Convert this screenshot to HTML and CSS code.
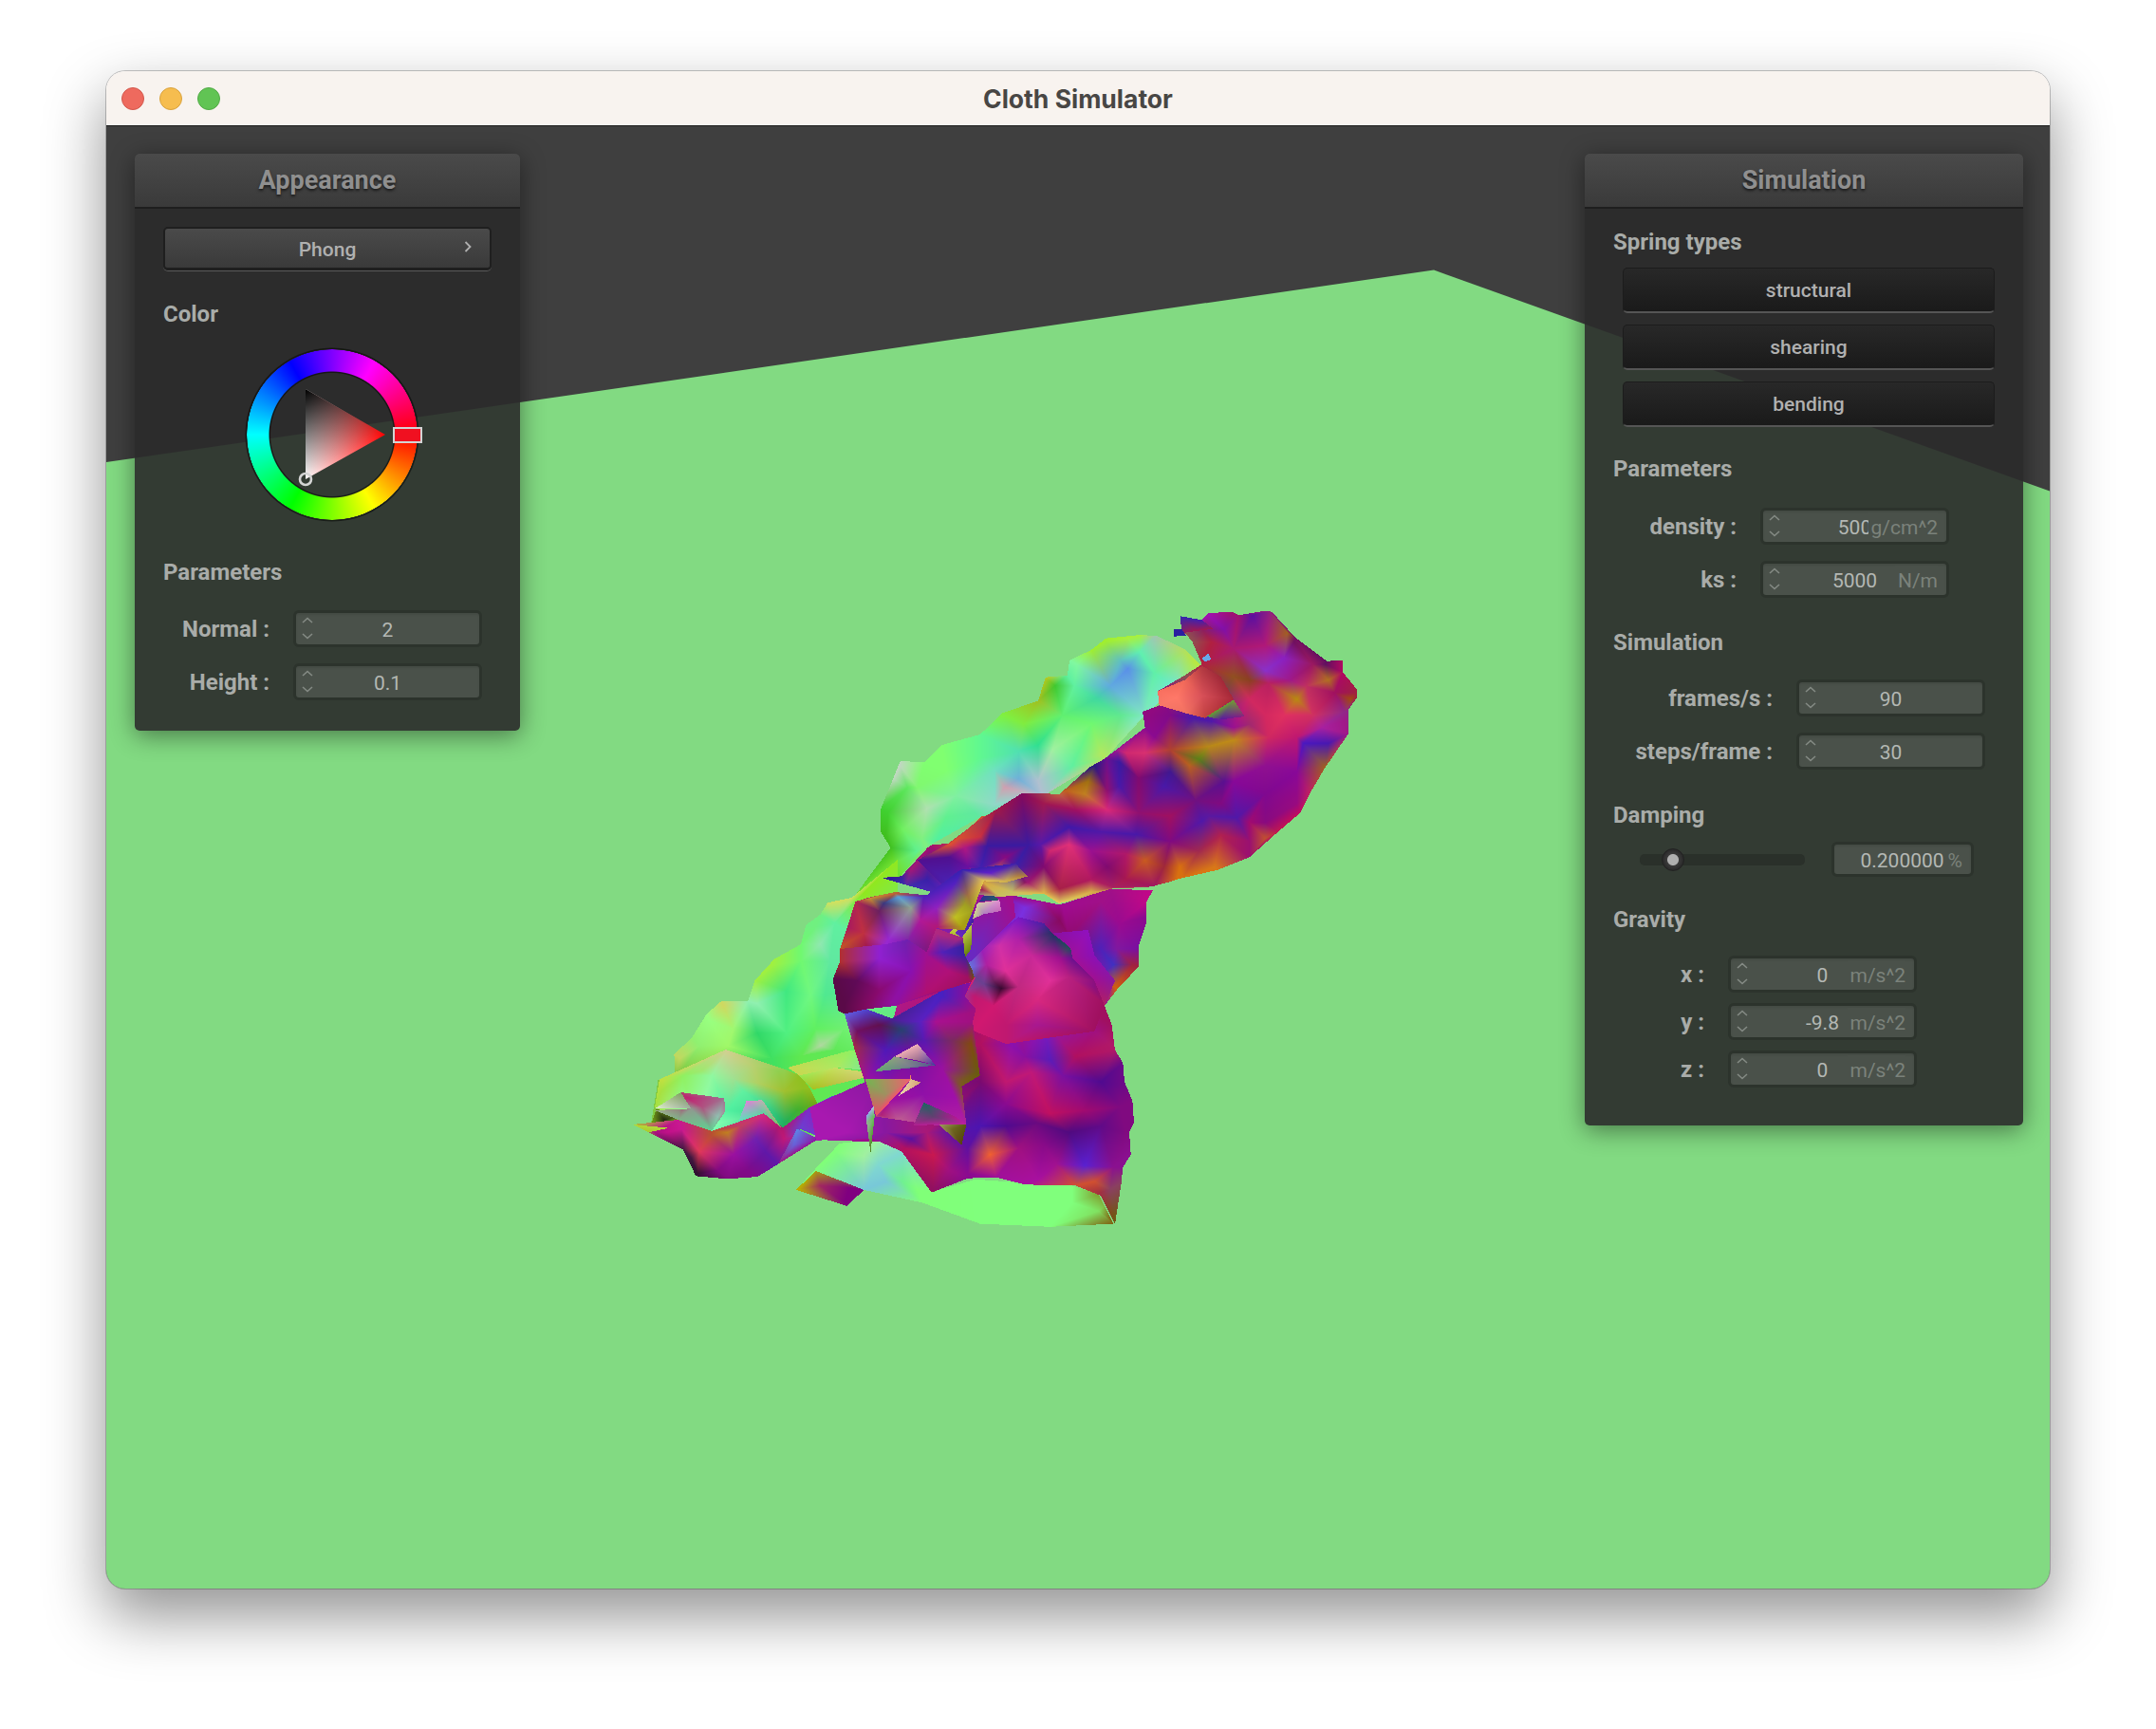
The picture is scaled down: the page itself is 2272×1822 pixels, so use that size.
FILE: index.html
```html
<!DOCTYPE html>
<html lang="en">
<head>
    <meta charset="UTF-8">
    <title>Cloth Simulator</title>
    <link rel="stylesheet" href="styles.css">
</head>
<body>

    <svg class="defs" width="0" height="0">
        <defs>
            <symbol id="spin" viewBox="0 0 14 26">
                <path d="M2 7 L7 2.5 L12 7 M2 19 L7 23.5 L12 19" fill="none" stroke="currentColor" stroke-width="1.6"/>
            </symbol>
        </defs>
    </svg>

    <div class="window">
        <div class="titlebar">
            <div class="lights">
                <span class="light red"></span>
                <span class="light yellow"></span>
                <span class="light green"></span>
            </div>
            <div class="title">Cloth Simulator</div>
        </div>

        <div class="canvas">
            <svg class="scene" viewBox="0 0 2048 1542">
                <polygon class="floor" points="0,355 1399,152.5 2048,385.5 2048,1542 0,1542"/>
            </svg>
            <canvas class="cloth" id="cloth" width="800" height="700"></canvas>

            <div class="panel panel-left">
                <div class="panel-head">Appearance</div>
                <div class="panel-body">
                    <div class="select">Phong
                        <svg class="select-arrow" viewBox="0 0 8 12"><path d="M1.5 1 L6.5 6 L1.5 11" fill="none" stroke="currentColor" stroke-width="1.8"/></svg>
                    </div>
                    <div class="group group-color">Color</div>
                    <div class="wheel-box">
                        <div class="wheel"></div>
                        <svg class="wheel-tri" viewBox="0 0 210 210">
                            <defs>
                                <linearGradient id="tri-hue" gradientUnits="userSpaceOnUse" x1="146" y1="0" x2="62" y2="0"><stop offset="0" stop-color="#f00"/><stop offset="1" stop-color="#fff"/></linearGradient>
                                <linearGradient id="tri-dark" gradientUnits="userSpaceOnUse" x1="104" y1="121" x2="62" y2="50"><stop offset="0" stop-color="#000" stop-opacity="0"/><stop offset="1" stop-color="#000"/></linearGradient>
                            </defs>
                            <polygon points="62,50 146,98 62,145" fill="url(#tri-hue)"/>
                            <polygon points="62,50 146,98 62,145" fill="url(#tri-dark)"/>
                            <circle cx="62" cy="145" r="6" fill="none" stroke="#d4d4d4" stroke-width="2.6"/>
                            <rect x="155" y="91" width="29" height="15" fill="#f01020" stroke="#d4d4d4" stroke-width="2"/>
                        </svg>
                    </div>
                    <div class="group group-params">Parameters</div>
                    <div class="rows rows-first">
                        <div class="row row-left"><label>Normal :</label><div class="field"><svg class="spin"><use href="#spin"/></svg>2</div></div>
                        <div class="row row-left"><label>Height :</label><div class="field"><svg class="spin"><use href="#spin"/></svg>0.1</div></div>
                    </div>
                </div>
            </div>

            <div class="panel panel-right">
                <div class="panel-head">Simulation</div>
                <div class="panel-body">
                    <div class="group group-springs">Spring types</div>
                    <div class="springs">
                        <div class="toggle">structural</div>
                        <div class="toggle">shearing</div>
                        <div class="toggle">bending</div>
                    </div>
                    <div class="group group-p2">Parameters</div>
                    <div class="rows rows-first">
                        <div class="row row-density"><label>density :</label><div class="field"><svg class="spin"><use href="#spin"/></svg>500<span class="unit">g/cm^2</span></div></div>
                        <div class="row row-density"><label>ks :</label><div class="field"><svg class="spin"><use href="#spin"/></svg>5000<span class="unit">N/m</span></div></div>
                    </div>
                    <div class="group group-sim">Simulation</div>
                    <div class="rows rows-sim">
                        <div class="row row-sim"><label>frames/s :</label><div class="field"><svg class="spin"><use href="#spin"/></svg>90</div></div>
                        <div class="row row-sim"><label>steps/frame :</label><div class="field"><svg class="spin"><use href="#spin"/></svg>30</div></div>
                    </div>
                    <div class="group group-damp">Damping</div>
                    <div class="damp-row">
                        <div class="slider"><span class="knob"></span></div>
                        <div class="field field-damp">0.200000<span class="unit-inline">%</span></div>
                    </div>
                    <div class="group group-grav">Gravity</div>
                    <div class="rows rows-grav">
                        <div class="row row-grav"><label>x :</label><div class="field"><svg class="spin"><use href="#spin"/></svg>0<span class="unit">m/s^2</span></div></div>
                        <div class="row row-grav"><label>y :</label><div class="field"><svg class="spin"><use href="#spin"/></svg>-9.8<span class="unit">m/s^2</span></div></div>
                        <div class="row row-grav"><label>z :</label><div class="field"><svg class="spin"><use href="#spin"/></svg>0<span class="unit">m/s^2</span></div></div>
                    </div>
                </div>
            </div>
        </div>
    </div>

    <script src="cloth.js"></script>
</body>
</html>
```

FILE: styles.css
```css
html, body {
    margin: 0;
    padding: 0;
    background: #fff;
}
body {
    padding: 75px 112px 0;
    height: 1822px;
    box-sizing: border-box;
    overflow: hidden;
    font-family: Roboto, sans-serif;
}
.defs {
    position: absolute;
}
.window {
    width: 2048px;
    height: 1599px;
    border-radius: 20px;
    overflow: hidden;
    box-shadow: 0 28px 62px 2px rgba(0, 0, 0, 0.42), 0 0 0 1px rgba(0, 0, 0, 0.22);
    display: flex;
    flex-direction: column;
}
.titlebar {
    position: relative;
    height: 58px;
    flex: none;
    background: #f8f3ef;
    border-bottom: 1px solid #1c1c1c;
    box-sizing: border-box;
    display: flex;
    align-items: center;
    justify-content: center;
}
.lights {
    position: absolute;
    left: 16px;
    top: 17px;
    display: flex;
    gap: 16px;
}
.light {
    width: 24px;
    height: 24px;
    border-radius: 50%;
    box-sizing: border-box;
}
.red {
    background: #ee6a5e;
    border: 1px solid #d2574c;
}
.yellow {
    background: #f6bd4f;
    border: 1px solid #d9a23d;
}
.green {
    background: #61c454;
    border: 1px solid #52aa46;
}
.title {
    font-family: Inter, sans-serif;
    font-weight: 700;
    font-size: 26.5px;
    color: #484644;
}
.canvas {
    position: relative;
    flex: 1;
    background: #3f3f3f;
}
.scene {
    position: absolute;
    left: 0;
    top: -1px;
    width: 2048px;
    height: 1542px;
}
.floor {
    fill: #82da82;
}
.cloth {
    position: absolute;
    left: 528px;
    top: 487px;
}
.panel {
    position: absolute;
    top: 29px;
    box-sizing: border-box;
    background: rgba(43, 43, 43, 0.91);
    border-radius: 5px;
    box-shadow: 0 5px 26px rgba(0, 0, 0, 0.45);
    color: #a9aca9;
}
.panel-left {
    left: 30px;
    width: 406px;
    height: 608px;
}
.panel-right {
    left: 1558px;
    width: 462px;
    height: 1024px;
}
.panel-head {
    height: 58px;
    box-sizing: border-box;
    background: linear-gradient(#4a4a4a, #3a3a3a);
    border-bottom: 2px solid #1e1e1e;
    border-radius: 5px 5px 0 0;
    text-align: center;
    line-height: 57px;
    font-size: 27px;
    font-weight: 700;
    color: #8f8f8f;
    text-shadow: 0 2px 3px rgba(0, 0, 0, 0.6);
}
.panel-body {
    padding: 0 30px;
}
.select {
    position: relative;
    margin-top: 19px;
    height: 46px;
    width: 346px;
    box-sizing: border-box;
    background: linear-gradient(#4a4a4a, #3a3a3a);
    border: 2px solid #1f1f1f;
    border-bottom: 3px solid #1f1f1f;
    box-shadow: 0 1px 0 #5a5a5a;
    border-radius: 5px;
    text-align: center;
    line-height: 44px;
    font-size: 21px;
    font-weight: 500;
    color: #b0b0b0;
}
.select-arrow {
    position: absolute;
    right: 19px;
    top: 13px;
    width: 8px;
    height: 12px;
    color: #b0b0b0;
}
.group {
    height: 28px;
    line-height: 29px;
    font-size: 24px;
    font-weight: 700;
    color: #a9aca9;
}
.group-color {
    margin-top: 32px;
}
.wheel-box {
    position: relative;
    margin: 23px 0 0 88px;
    width: 180px;
    height: 180px;
    border-radius: 50%;
    box-shadow: 0 0 0 1.5px rgba(0, 0, 0, 0.5);
    background: radial-gradient(circle, transparent 64.5px, rgba(0, 0, 0, 0.5) 65.5px, rgba(0, 0, 0, 0.5) 67px, transparent 67.5px);
}
.wheel {
    width: 180px;
    height: 180px;
    border-radius: 50%;
    background: conic-gradient(from 90deg, #f00, #ff0, #0f0, #0ff, #00f, #f0f, #f00);
    -webkit-mask: radial-gradient(circle, transparent 66px, #000 67px, #000 89.5px, transparent 90px);
    mask: radial-gradient(circle, transparent 66px, #000 67px, #000 89.5px, transparent 90px);
}
.wheel-tri {
    position: absolute;
    left: 0;
    top: -8px;
    width: 210px;
    height: 210px;
}
.group-params {
    margin-top: 41px;
}
.rows {
    display: flex;
    flex-direction: column;
    gap: 17px;
}
.rows-first {
    margin-top: 26px;
}
.panel-right .rows-first {
    margin-top: 27px;
}
.row {
    display: flex;
    align-items: center;
    gap: 25px;
}
.row label {
    text-align: right;
    font-size: 24px;
    line-height: 30px;
    font-weight: 700;
    color: #a9aca9;
}
.row-left label {
    width: 112px;
}
.row-density label {
    width: 130px;
}
.row-sim label {
    width: 168px;
}
.row-grav label {
    width: 96px;
}
.field {
    position: relative;
    width: 199px;
    height: 39px;
    box-sizing: border-box;
    background: #4a514a;
    border: 3px solid #2c332c;
    border-radius: 6px;
    box-shadow: inset 0 2px 2px rgba(0, 0, 0, 0.08);
    text-align: center;
    line-height: 36px;
    font-size: 21px;
    color: #b4b8b4;
}
.spin {
    position: absolute;
    left: 5px;
    top: 3px;
    width: 14px;
    height: 26px;
    color: #848a84;
}
.unit {
    position: absolute;
    right: 9px;
    top: 2px;
    bottom: 2px;
    line-height: 32px;
    padding-left: 3px;
    background: #4a514a;
    color: #7b827b;
}
.group-springs {
    margin-top: 21px;
}
.springs {
    margin: 13px 0 0 10px;
    display: flex;
    flex-direction: column;
    gap: 12px;
}
.toggle {
    width: 392px;
    height: 48px;
    box-sizing: border-box;
    background: linear-gradient(#282828, #1a1a1a);
    border: 1px solid #1c1c1c;
    border-bottom: 2px solid #555;
    border-radius: 5px;
    text-align: center;
    line-height: 46px;
    font-size: 21px;
    font-weight: 500;
    color: #b0b0b0;
}
.group-p2 {
    margin-top: 30px;
}
.group-sim {
    margin-top: 33px;
}
.rows-sim {
    margin-top: 25px;
}
.group-damp {
    margin-top: 34px;
}
.damp-row {
    margin: 14px 0 0 28px;
    display: flex;
    align-items: center;
    gap: 28px;
}
.slider {
    position: relative;
    width: 174px;
    height: 12px;
    background: #2a302a;
    border-radius: 5px;
}
.knob {
    position: absolute;
    left: 23px;
    top: -6px;
    width: 24px;
    height: 24px;
    box-sizing: border-box;
    border-radius: 50%;
    background: radial-gradient(circle, #b0b0b0 0 5.5px, #3a3a3a 6.5px, #262626 12px);
    border: 1px solid #222;
}
.field-damp {
    width: 150px;
    height: 37px;
    line-height: 34px;
    text-align: right;
    padding-right: 9px;
}
.unit-inline {
    margin-left: 4px;
    color: #7b827b;
}
.group-grav {
    margin-top: 31px;
}
.rows-grav {
    margin-top: 24px;
    gap: 11px;
}
```

FILE: cloth.js
```js
// The cloth is the OpenGL view of the app, so it is painted pixel by pixel:
// each piece is an outline plus colour samples, triangulated and
// shaded across each triangle the way the original mesh is.

const canvas = document.getElementById("cloth");
const ctx = canvas.getContext("2d");
const image = ctx.createImageData(canvas.width, canvas.height);

// coordinate systems the points were measured in, origin and scale on the page
const WIDE = { ox: 640, oy: 620, sx: 1.96, sy: 2.24 };
const MID = { ox: 860, oy: 900, sx: 3, sy: 3 };
const LOW = { ox: 640, oy: 1000, sx: 3, sy: 3 };
const TOP = { ox: 1000, oy: 620, sx: 3, sy: 3 };

function parseHex(hex) {
    return [parseInt(hex.slice(1, 3), 16), parseInt(hex.slice(3, 5), 16), parseInt(hex.slice(5, 7), 16)];
}

function toPixels(crop, x, y) {
    return [crop.ox + x / crop.sx - 640, crop.oy + y / crop.sy - 620];
}

function inCircle(t, p) {
    const ax = t.a[0] - p[0], ay = t.a[1] - p[1];
    const bx = t.b[0] - p[0], by = t.b[1] - p[1];
    const cx = t.c[0] - p[0], cy = t.c[1] - p[1];
    const det = (ax * ax + ay * ay) * (bx * cy - cx * by)
        - (bx * bx + by * by) * (ax * cy - cx * ay)
        + (cx * cx + cy * cy) * (ax * by - bx * ay);
    const turn = (t.b[0] - t.a[0]) * (t.c[1] - t.a[1]) - (t.b[1] - t.a[1]) * (t.c[0] - t.a[0]);
    return turn > 0 ? det > 0 : det < 0;
}

// Bowyer-Watson
function triangulate(dots) {
    const big = [[-9000, -9000, 0, 0, 0], [12000, -9000, 0, 0, 0], [0, 12000, 0, 0, 0]];
    let tris = [{ a: big[0], b: big[1], c: big[2] }];
    dots.forEach(function (p) {
        const edges = [];
        const keep = [];
        tris.forEach(function (t) {
            if (inCircle(t, p)) {
                edges.push([t.a, t.b], [t.b, t.c], [t.c, t.a]);
            } else {
                keep.push(t);
            }
        });
        edges.forEach(function (e, i) {
            const shared = edges.some(function (f, j) {
                return i !== j && ((e[0] === f[0] && e[1] === f[1]) || (e[0] === f[1] && e[1] === f[0]));
            });
            if (!shared) {
                keep.push({ a: e[0], b: e[1], c: p });
            }
        });
        tris = keep;
    });
    return tris.filter(function (t) {
        return big.indexOf(t.a) < 0 && big.indexOf(t.b) < 0 && big.indexOf(t.c) < 0;
    });
}

function nearest(dots, x, y) {
    let best = dots[0], bestD = Infinity;
    dots.forEach(function (d) {
        const q = (d[0] - x) * (d[0] - x) + (d[1] - y) * (d[1] - y);
        if (q < bestD) {
            bestD = q;
            best = d;
        }
    });
    return best;
}

function piece(crop, outline, samples) {
    const nums = outline.trim().split(/[\s,]+/).map(Number);
    const pts = [];
    for (let i = 0; i < nums.length; i += 2) {
        pts.push(toPixels(crop, nums[i], nums[i + 1]));
    }
    const dots = samples.trim().split(/\s+/).map(function (token, i) {
        const parts = token.split(",");
        const p = toPixels(crop, Number(parts[0]), Number(parts[1]));
        const c = parseHex(parts[2]);
        return [p[0] + (i % 7) * 0.003, p[1] + (i % 5) * 0.003, c[0], c[1], c[2]];
    });

    // outline corners take the colour of the closest sample, so the mesh reaches the edge
    const corners = [];
    pts.forEach(function (p, i) {
        const n = nearest(dots, p[0], p[1]);
        const q = (n[0] - p[0]) * (n[0] - p[0]) + (n[1] - p[1]) * (n[1] - p[1]);
        if (q > 4) {
            corners.push([p[0] + 0.002 * i, p[1] - 0.002 * i, n[2], n[3], n[4]]);
        }
    });
    const mesh = triangulate(dots.concat(corners));

    // mark the pixels inside the outline
    const w = canvas.width, h = canvas.height;
    const inside = new Uint8Array(w * h);
    for (let y = 0; y < h; y++) {
        const cy = y + 0.5;
        const cross = [];
        for (let i = 0; i < pts.length; i++) {
            const a = pts[i], b = pts[(i + 1) % pts.length];
            if ((a[1] <= cy) !== (b[1] <= cy)) {
                cross.push(a[0] + (cy - a[1]) * (b[0] - a[0]) / (b[1] - a[1]));
            }
        }
        cross.sort(function (m, n) { return m - n; });
        for (let k = 0; k + 1 < cross.length; k += 2) {
            const from = Math.max(0, Math.round(cross[k]));
            const to = Math.min(w - 1, Math.round(cross[k + 1]) - 1);
            for (let x = from; x <= to; x++) {
                inside[y * w + x] = 1;
            }
        }
    }

    mesh.forEach(function (t) {
        const ax = t.a[0], ay = t.a[1], bx = t.b[0], by = t.b[1], cx = t.c[0], cy = t.c[1];
        const area = (bx - ax) * (cy - ay) - (by - ay) * (cx - ax);
        if (Math.abs(area) < 0.001) {
            return;
        }
        const x0 = Math.max(0, Math.floor(Math.min(ax, bx, cx)));
        const x1 = Math.min(w - 1, Math.ceil(Math.max(ax, bx, cx)));
        const y0 = Math.max(0, Math.floor(Math.min(ay, by, cy)));
        const y1 = Math.min(h - 1, Math.ceil(Math.max(ay, by, cy)));
        for (let y = y0; y <= y1; y++) {
            for (let x = x0; x <= x1; x++) {
                if (!inside[y * w + x]) {
                    continue;
                }
                const px = x + 0.5, py = y + 0.5;
                const u = ((bx - px) * (cy - py) - (by - py) * (cx - px)) / area;
                const v = ((cx - px) * (ay - py) - (cy - py) * (ax - px)) / area;
                const s = 1 - u - v;
                if (u < -0.01 || v < -0.01 || s < -0.01) {
                    continue;
                }
                const at = (y * w + x) * 4;
                image.data[at] = u * t.a[2] + v * t.b[2] + s * t.c[2];
                image.data[at + 1] = u * t.a[3] + v * t.b[3] + s * t.c[3];
                image.data[at + 2] = u * t.a[4] + v * t.b[4] + s * t.c[4];
                image.data[at + 3] = 255;
            }
        }
    });
}

// back side of the sheet, upper part
piece(WIDE, "1000,145 1030,118 1100,110 1135,112 1195,145 1225,180 1110,300 1030,400 900,490 770,540 660,610 605,680 560,720 505,735 585,612 565,575 565,520 590,450 605,408 655,410 690,370 770,345 815,295 890,265 905,210 950,205 955,170",
    `1030,125,#a0ee30 1075,118,#a8f040 1130,115,#a0c8b0 1190,150,#b0e060 1215,175,#b8e840 1100,150,#60f0b0 1060,170,#60c0c0 1075,190,#5a90e8 1130,200,#60f0a8 1170,230,#70e8d0 1040,230,#60a8e0 1010,260,#40d8a0 970,180,#80f8a0 965,230,#60f0a0 925,230,#40c830 900,215,#c0c820 890,265,#a0c020 940,300,#60f070 1000,320,#70f870 1060,300,#60e890 1095,310,#80e8c0 860,320,#80ec40 820,300,#80f040 890,370,#30e090 850,385,#50e0b0 800,430,#70e0c0 920,380,#a0f0a0 1020,390,#b0e860 960,420,#60f0a0 850,450,#70b0d8 890,455,#b0c0d0 820,470,#d0a0b0 770,400,#60f890 700,430,#80ff70 640,470,#80f870 720,490,#80f0a0 605,420,#c0d8c0 620,470,#60e860 660,520,#b0e0b0 580,530,#40d030 575,580,#40c020 610,570,#70f060 650,590,#80f080 700,540,#60f090 760,530,#60e8a0 800,510,#90d8c8 680,600,#50f0a0 640,620,#60f090 590,650,#70e030`);

// back side, lower left
piece(WIDE, "600,640 505,730 455,742 440,770 410,795 400,840 345,875 305,925 290,975 235,975 205,1005 175,1060 138,1100 140,1150 105,1160 90,1265 55,1267 110,1290 400,1300 640,1200 600,900",
    `530,720,#90e820 480,740,#d0e060 470,790,#60f0a0 430,800,#70f080 440,840,#90e8b0 460,880,#60e8a0 400,880,#70f870 340,890,#a0f040 370,950,#40e880 310,980,#90f0b0 420,960,#70f880 450,960,#50e890 240,985,#d0d860 210,1020,#98ff80 260,1040,#a0f870 310,1050,#30d868 370,1050,#50f080 430,1040,#60f060 440,1080,#b0d8a0 490,1040,#70f070 150,1110,#c0d860 190,1080,#90f070 250,1080,#a0f868 340,1110,#40e060 400,1105,#60e850 470,1090,#60e858 150,1145,#80c840`);

// back side, bottom strip and its loose corner
piece(WIDE, "390,1420 430,1370 480,1310 560,1300 610,1330 670,1425 760,1395 880,1405 960,1410 1015,1430 1045,1500 915,1507 770,1500 650,1450 530,1420 495,1458",
    `470,1330,#80ff78 530,1340,#a0f0a0 560,1360,#80d8d0 575,1400,#78c8d8 610,1400,#70f090 640,1420,#80ff78 800,1440,#80ff7c 960,1450,#80ff7c 1015,1470,#80e060 1040,1490,#806010 1035,1450,#80a030`);
piece(WIDE, "390,1420 432,1372 530,1420 495,1458",
    `395,1418,#b8b000 430,1375,#a8a010 440,1410,#a02860 500,1415,#800080 490,1450,#800080`);

// lower left cluster
piece(LOW, "165,412 375,318 560,380 610,400 640,440 670,500 555,565 495,520 330,575 225,540 150,500",
    `175,415,#c0e040 240,400,#90f060 300,385,#a0e870 375,325,#d0d090 460,370,#b8d070 540,385,#90d050 330,400,#90f8a0 400,410,#a0e090 480,425,#b0d060 560,450,#a0c030 620,440,#90c020 660,490,#70a818 600,510,#40b030 560,550,#20b060 500,490,#40d890 430,450,#60f0a0 380,510,#50f0a0 350,550,#80ffb0 170,450,#a8e040 280,560,#90ffa0`);
piece(LOW, "137,558 155,505 225,530 195,566",
    `150,530,#608018 180,540,#202810 200,545,#608020 145,555,#70a010`);
piece(LOW, "80,555 225,540 330,575 495,520 555,565 640,500 700,470 830,420 900,500 900,610 700,606 610,570 540,680 475,720 380,727 280,718 240,635",
    `90,558,#b0c030 150,580,#a81080 190,580,#c01088 235,570,#c81890 290,640,#e03858 330,590,#b85030 380,580,#c08020 420,560,#c04060 490,530,#d02880 540,565,#b01870 265,660,#401840 285,710,#301030 350,700,#800a80 440,700,#800a88 500,640,#6018a8 400,650,#9a10a0 470,600,#7020b0 560,600,#c01878 640,500,#8028c8 700,510,#6040e0 760,470,#7028d0 815,430,#5020c0 690,560,#9020c0 740,560,#b028c0 800,500,#a018b0 650,590,#6a40d0 850,600,#a00888 700,600,#a818a8`);
piece(LOW, "540,680 600,568 668,600",
    `540,680,#a01880 600,568,#5a88e8 668,600,#9010a0 590,620,#6860d8`);
piece(LOW, "150,505 232,453 265,505",
    `150,505,#e0f0d0 232,453,#80a060 265,505,#a0b0a0 190,495,#c0d0b0`);
piece(LOW, "232,453 370,472 372,515 330,575 225,540 150,510 265,505",
    `232,453,#b04070 370,472,#a07090 372,515,#a88898 330,575,#60d090 225,540,#80b088 150,510,#a0b090 265,505,#909890 300,500,#b05080 350,530,#90c0b0 250,470,#c02070`);
piece(LOW, "415,545 440,480 490,478 550,565 495,520",
    `415,545,#60e0c0 440,480,#e080d8 490,478,#c0b0b0 550,565,#80c060 495,520,#60d0a0`);
piece(LOW, "80,555 195,566 130,580", `80,555,#b4d838 195,566,#b4d838 130,580,#a8c830`);
piece(LOW, "570,375 770,320 905,340 840,385 720,375 607,400",
    `570,375,#c8d850 770,320,#90f060 905,340,#80e870 840,385,#70e8a0 720,375,#b0e860`);
piece(LOW, "607,400 720,375 970,412 820,405 650,445",
    `607,400,#98e850 720,375,#c8e060 850,405,#d0c870 970,412,#e8c080 650,445,#a8c020`);

// central body
piece(MID, "300,300 912,480 935,540 945,620 970,660 975,720 1000,780 1005,850 990,880 995,950 970,990 965,1040 945,1170 900,1080 820,1048 660,1045 570,1022 480,1025 365,1070 270,940 180,900 0,905 -20,800 200,700",
    `500,530,#a01070 530,480,#d01870 600,490,#c81870 700,470,#d83080 790,440,#c02080 870,470,#b01060 905,520,#a01060 720,530,#8a18c0 640,560,#a01090 620,600,#8a10b0 520,600,#b01060 880,560,#a01080 930,600,#b01868 820,640,#b01060 740,650,#5a1cb8 660,640,#8a10a0 680,690,#c01878 600,720,#c01870 520,720,#7a0a70 780,700,#7a10a0 900,720,#500a90 960,730,#6a0a88 740,820,#c01060 850,810,#a00a70 960,800,#800a80 600,790,#8a0a90 520,860,#4c14b0 600,860,#500a90 800,880,#500a80 700,850,#6a0a80 900,860,#600a88 980,880,#800a80 550,950,#f06030 480,930,#6010a0 640,930,#a01080 720,920,#880a88 760,980,#a01090 850,985,#5a20d0 940,990,#8a1090 880,1035,#d05030 700,1030,#a810a0 580,1010,#a01098 480,1010,#8a0a90 370,950,#c81850 370,1060,#901060 300,900,#5a10a0 220,880,#8818a0 280,930,#b01060 420,1000,#a01080 100,880,#a818b0 930,1060,#8a4060 945,1150,#705810 900,1070,#a03040 350,880,#a81878 430,880,#5a14a8`);

// piece on the right behind the dome
piece(MID, "570,120 770,160 930,110 1065,115 1045,150 1045,215 1020,290 1020,355 950,430 912,480 880,400 810,330 600,300",
    `600,135,#8a10a0 660,170,#7a30e0 720,150,#a01090 780,170,#a00a90 900,150,#a01088 1050,120,#c00888 1040,200,#8a0a90 960,220,#9a0a90 1010,300,#7a10a0 770,210,#880a60 800,260,#900a70 950,300,#8018a0 900,300,#5020b8 940,350,#4030c0 1000,350,#a02040 945,420,#d06010 920,440,#9010a0`);
piece(MID, "750,250 860,240 880,320 945,400 912,480 880,400 810,330",
    `750,250,#8a10a0 860,240,#9010c0 880,320,#8a10b8 945,400,#8a18a0 912,480,#b02060 810,330,#a01098 880,400,#a01090`);

// dome
piece(MID, "447,375 520,290 640,195 720,215 745,250 805,295 810,330 880,400 912,480 880,560 600,600 500,560 470,450 505,390",
    `447,375,#58a8d8 500,320,#7050d0 540,350,#b020a0 520,290,#9020c0 640,200,#7818c8 720,220,#4a20a0 750,260,#283068 800,295,#205058 810,330,#6a1090 770,330,#a01090 640,270,#b020a8 580,290,#d030a8 680,320,#c82898 600,370,#e03098 740,400,#e03098 800,390,#b82080 880,420,#8a1080 905,470,#a01060 700,460,#d82880 500,355,#7060d8 560,400,#702060 585,425,#380830 530,410,#6a4090 640,420,#c02880 500,450,#c01870 560,480,#d01870 480,430,#a03090 700,540,#a81890 600,540,#c01870`);

// scraps in the gap above the dome
piece(MID, "370,100 620,100 630,200 500,330 440,380 380,350",
    `400,150,#a01090 600,130,#a01090 500,300,#6a28c0`);
piece(MID, "380,345 420,250 470,200 495,190 490,300 440,370",
    `385,345,#80a010 420,250,#b0c030 470,210,#e0e060 490,300,#708810 440,370,#406010 460,300,#90a820`);
piece(MID, "440,250 495,185 497,215 460,265", `440,250,#6a28c0 495,185,#5a20c0 497,215,#4020a0 460,265,#6a28c0`);
piece(MID, "495,205 510,155 580,145 585,180 530,190",
    `495,205,#c8d880 510,155,#d0d0a0 580,145,#e090d0 585,180,#c868b8 530,190,#b080c0`);
piece(MID, "515,150 540,118 580,145", `515,150,#303090 540,118,#303090 580,145,#206858`);

// ridge band
piece(MID, "205,75 270,70 360,-28 430,-35 525,-120 1000,-120 1000,80 770,160 735,120 650,130 575,125 530,85 400,130",
    `210,78,#2a1a98 270,75,#3820a0 350,80,#3a20a8 280,110,#4030b0 400,110,#5820b8 360,-25,#a01070 430,-30,#c03050 520,-35,#d05030 300,50,#a01878 420,20,#a01070 480,0,#5a0a80 560,-30,#4a1ab0 680,-30,#4020a8 760,-5,#5a1090 800,-20,#c01890 900,-30,#d83080 950,10,#8a0a80 700,30,#800a80 840,50,#901080 960,70,#a01090 600,10,#8a10a0 500,40,#9a0a80 680,110,#c07020 620,80,#b08030 560,110,#e8d880 540,90,#e8d878 650,125,#f0e080 735,118,#f0e078 770,155,#e8d040 800,145,#e0c068 900,115,#f0b878 960,85,#d08840 770,90,#700a70 720,60,#7a0a80`);

// top right lobe
piece(TOP, "712,130 735,128 732,88 800,100 820,78 890,70 915,85 1015,68 1095,155 1195,230 1245,228 1245,265 1290,320 1290,345 1262,385 1262,460 1215,530 1190,565 1140,650 1110,710 1040,770 950,850 850,890 720,920 650,945 520,948 350,998 300,965 160,975 0,960 -100,860 0,805 100,730 230,648 350,650 445,565 490,540 620,440 612,390 665,370 660,325 745,275 800,240 770,170 750,145 712,150",
    `820,85,#a010b0 890,75,#a01070 960,85,#5a10a0 1015,72,#902080 1070,140,#a06020 870,130,#8010a8 800,130,#8a2060 770,170,#905050 830,170,#b02040 900,190,#a81870 1000,180,#b01878 1090,170,#701060 1190,240,#601060 1245,235,#b00860 1150,240,#9a1860 1000,260,#8a30c8 1060,220,#8a20c0 900,280,#905020 950,290,#8a4020 1100,350,#b88a10 1200,290,#b07020 1130,310,#c03060 1080,290,#a01888 1010,300,#b82060 950,350,#d02860 1000,400,#d42860 1060,400,#e03060 950,430,#a02870 1270,350,#a04a10 1285,330,#a02040 1220,330,#a01060 1150,400,#d03060 1180,440,#a820a0 1250,420,#a01888 1250,390,#902888 1100,470,#c01870 1010,470,#d02860 900,480,#c08a18 820,500,#b88818 790,540,#5a8018 830,420,#5018a8 900,440,#9a1090 770,410,#4a18a8 700,400,#800a88 630,400,#900a80 620,440,#8a0a90 1120,490,#4a18c0 1200,490,#4818b0 1215,530,#b04040 1190,565,#a06020 1140,650,#c02060 1000,560,#901090 1100,580,#880898 900,610,#880898 1000,650,#800890 1100,680,#980a80 1110,710,#c00a60 1040,770,#c01850 1000,740,#880a80 560,520,#d02870 620,520,#d83070 700,510,#b04030 760,560,#b86020 650,470,#8a0a90 530,510,#a01890 500,540,#6a1090 460,560,#281a80 540,550,#3a1aa0 700,580,#401890 870,610,#5a1090 600,600,#800a70 680,625,#4818a8 540,625,#4818a8 780,670,#701080 860,680,#800a80 950,740,#a00a70 440,610,#a07010 370,640,#c06020 500,640,#901070 430,650,#c08020 350,650,#c06040 230,660,#800a60 300,680,#a01850 150,700,#a01848 100,740,#b03848 30,790,#d85030 0,810,#e05030 100,785,#c83040 400,700,#a01060 500,700,#d82878 600,710,#901070 700,720,#a01060 820,720,#5a18a0 860,780,#b02050 950,800,#9a1070 1000,790,#c05030 380,755,#4018a8 480,770,#5018a8 290,810,#5818a8 590,778,#4818a8 700,800,#800a80 800,735,#5018a8 910,725,#5018a8 380,810,#e03078 320,830,#d02870 450,830,#9a1090 620,860,#c85a20 560,840,#b01868 500,880,#800a70 680,880,#a02838 730,880,#d87010 740,915,#d87010 840,880,#d87818 790,830,#a02850 650,940,#a01860 520,945,#a82060 450,960,#d8b048 350,995,#e0d060 300,965,#e0b848 200,960,#c8c060 110,930,#d8a840 240,930,#8a1860 350,950,#a82048 450,920,#b01860 560,920,#a81850 50,820,#b01880 120,815,#3a1aa0 250,812,#3a1aa0 0,850,#501090 60,880,#6a10a0 180,850,#880a80 0,925,#4a20b0 100,885,#4020b0 210,878,#3a20a8 250,930,#a01870 100,950,#a01850 300,880,#800a70`);
piece(TOP, "660,325 745,290 800,245 860,280 900,350 810,410 750,395 665,370",
    `660,325,#f87060 745,290,#f06858 800,245,#b03840 860,280,#a02838 900,350,#a82838 810,410,#c04040 750,395,#f07060 665,370,#f87868 720,345,#ff7868 800,340,#d85058`);
piece(TOP, "815,405 900,352 935,405 860,415", `815,405,#60a030 900,352,#70a030 935,405,#8a2080 860,415,#5a18a0`);
piece(TOP, "732,88 800,100 835,128 780,135 735,142", `732,88,#3028b0 800,100,#4020b0 835,128,#a01850 780,135,#a01850 735,142,#8a2060`);
piece(TOP, "712,130 735,128 750,150 712,152", `712,130,#2a1fa0 750,150,#2a1fa0`);
piece(TOP, "800,222 820,205 830,225 810,232", `810,220,#68a8e8 820,222,#68a8e8`);

// big left fold, from the bottom layer up
piece(MID, "90,505 160,490 240,520 400,430 490,405 470,450 505,490 495,530 518,700 460,735 475,855 460,920 395,860 190,830 155,720 118,615",
    `95,510,#6458d8 160,495,#5040c8 130,560,#701060 120,610,#a02848 200,540,#601050 240,525,#4a2090 270,555,#284070 330,530,#5a20c0 400,450,#4820c0 470,420,#8010a0 490,500,#a01080 380,530,#a81090 340,590,#5818b0 430,590,#7a2a60 490,600,#804a10 510,690,#6a5a10 460,720,#7a5a20 220,620,#5018b8 300,620,#7010a0 400,680,#9a10a0 340,760,#9010a8 440,770,#a010a8 230,780,#a010a0 465,850,#b020a0 205,825,#b02078 260,845,#c06090 190,830,#b04080`);
piece(MID, "75,300 200,280 290,270 350,310 380,235 465,265 470,320 505,390 490,405 470,410 250,480 160,490 90,505 70,495 53,395 75,340",
    `75,310,#b03030 60,395,#5a0a48 90,480,#5a0a48 130,400,#600a58 200,330,#9020d0 280,280,#7020b0 350,320,#a01090 380,250,#b02880 450,270,#a02880 465,290,#3a20a0 400,310,#5020b8 300,370,#8a10b0 200,430,#8a0a70 420,370,#b01078 480,390,#a01060 500,390,#6a5010 350,440,#b01070 160,480,#800a60 240,470,#9010a0`);
piece(MID, "125,145 250,120 350,130 460,45 630,30 670,70 600,90 530,85 495,180 470,240 380,235 350,310 290,270 220,285 75,300",
    `125,150,#b02850 170,140,#c89030 250,125,#c06030 100,230,#a81860 85,290,#c05028 150,250,#c03040 230,270,#9828d0 200,180,#6a2060 215,155,#3a3880 260,135,#58a0d8 300,170,#90a090 340,135,#5020b8 330,210,#b01898 380,170,#9020c0 440,90,#5020c0 460,50,#3820b0 630,30,#4020a8 550,60,#6020c8 640,70,#b08040 600,85,#d0b050 530,85,#e8c850 480,130,#a07040 470,160,#a0a020 440,200,#c0c020 460,230,#a8a010 385,230,#b01878 350,300,#801880 290,275,#8020a8 160,295,#a01850`);

// folded corners lying on top
piece(MID, "388,856 475,855 460,920", `388,856,#a09a60 475,855,#585a10 460,920,#584010 430,870,#706820`);
piece(MID, "185,688 248,640 378,668", `185,688,#60a870 248,640,#90a080 378,668,#505090 300,672,#7a7a90`);
piece(MID, "248,640 320,600 378,668 320,652", `248,640,#e8a8b0 320,600,#f0b0b8 378,668,#4030a0 320,652,#a07090`);
piece(MID, "155,710 300,712 190,830", `155,710,#70b850 300,712,#f06070 190,830,#f04868 220,760,#a09060`);
piece(MID, "300,686 300,712 330,722 295,726", `300,686,#f0705c 330,722,#e09050 295,726,#e8a060`);
piece(MID, "260,765 332,722 300,712", `260,765,#f0d8b0 332,722,#d0a070 300,712,#e0c090`);
piece(MID, "160,825 183,796 185,830 172,945 160,850", `160,825,#90a8f0 183,796,#b0c0e0 185,830,#60c050 172,945,#508020 165,860,#90b090`);
piece(MID, "308,857 340,785 440,830 475,855", `308,857,#b02090 340,785,#186860 440,830,#b01890 475,855,#c020a0 370,830,#604070`);

ctx.putImageData(image, 0, 0);
```
